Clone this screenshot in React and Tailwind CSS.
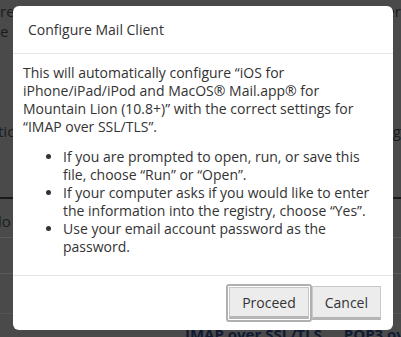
export default function App() {
  return (
    <div className="relative w-[401px] h-[337px] overflow-hidden bg-[#4a4a4a] font-['Open_Sans',sans-serif]">
      {/* page behind the overlay */}
      <div className="flex flex-col text-[15px] text-[#1c1c1c] leading-[20px]">
        <div className="flex justify-between pt-[1px]">
          <span>re</span>
          <span>er</span>
        </div>
        <div className="flex justify-between">
          <span>e</span>
          <span></span>
        </div>
        <div className="flex justify-between mt-[80px]">
          <span className="-ml-[2px]">tio</span>
          <span>g</span>
        </div>
        <div className="mt-[56px] border-t-2 border-[#1a1a1a]" />
        <div className="flex pt-[12px] pb-[6px] border-b border-[#5a5a5a]">
          <span className="-ml-[2px]">lo</span>
        </div>
        <div className="h-[36px] border-b border-[#5a5a5a]" />
        <div className="h-[40px] border-b border-[#555]" />
        <div className="flex gap-[22px] pl-[185px] pt-[10px] font-bold text-[#101a33] whitespace-nowrap">
          <span>IMAP over SSL/TLS</span>
          <span>POP3 over</span>
        </div>
      </div>

      {/* modal */}
      <div className="absolute left-[13px] top-[6px] w-[380px] h-[324px] bg-white rounded-[6px] flex flex-col text-[#333]">
        <div className="h-[48px] px-[15px] flex items-center border-b border-[#e5e5e5] text-[14px]">
          Configure Mail Client
        </div>
        <div className="flex-1 px-[10px] pt-[10px] text-[14px] leading-[18px]">
          <p>
            This will automatically configure “iOS for iPhone/iPad/iPod and MacOS® Mail.app® for Mountain Lion (10.8+)” with the correct settings for “IMAP over SSL/TLS”.
          </p>
          <ul className="list-disc pl-[40px] mt-[12px]">
            <li>If you are prompted to open, run, or save this file, choose “Run” or “Open”.</li>
            <li>If your computer asks if you would like to enter the information into the registry, choose “Yes”.</li>
            <li>Use your email account password as the password.</li>
          </ul>
        </div>
        <div className="h-[55px] border-t border-[#e5e5e5] flex items-start justify-end pr-[12px] pt-[10px]">
          <div className="flex items-center">
            <div className="rounded-[3px] border-2 border-[#b0b0b0] p-[1px] -my-[3px]">
              <button className="h-[32px] px-[12px] bg-[#ececec] border border-[#c8c8c8] border-b-[3px] border-b-[#b5b5b5] text-[14px] text-[#333]">
                Proceed
              </button>
            </div>
            <button className="h-[34px] px-[12px] bg-[#ececec] border border-[#c8c8c8] border-b-[3px] border-b-[#b5b5b5] text-[14px] text-[#333]">
              Cancel
            </button>
          </div>
        </div>
      </div>
    </div>
  );
}
